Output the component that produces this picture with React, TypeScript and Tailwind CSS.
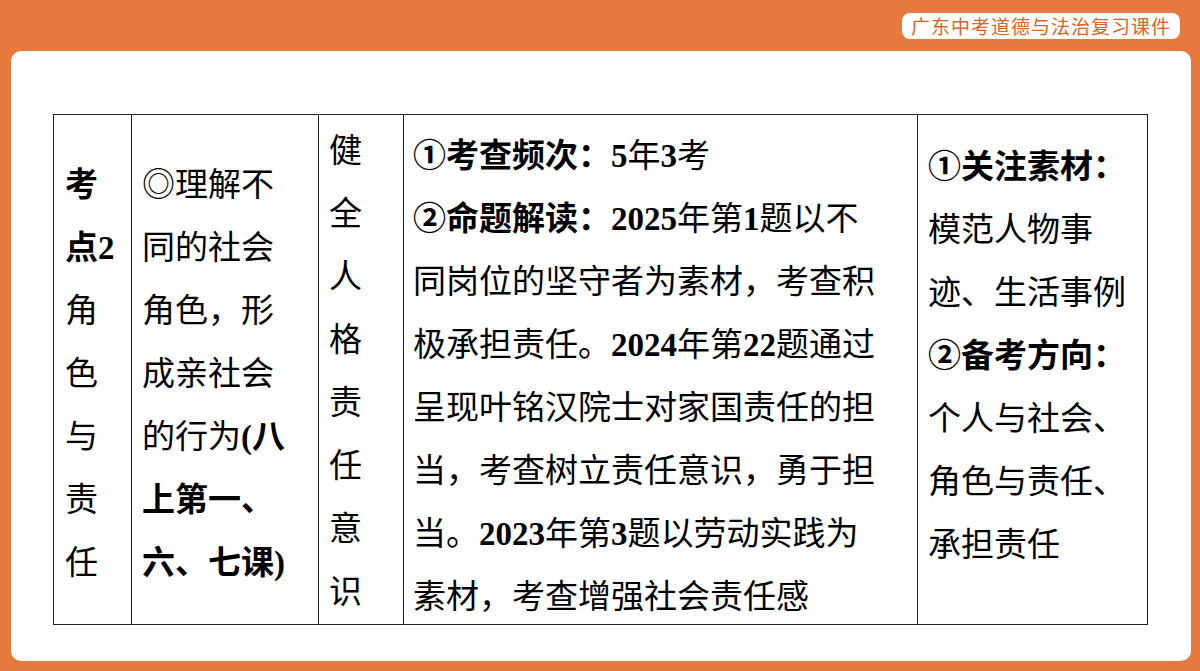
const font = { fontFamily: '"Liberation Serif", "Noto Sans CJK SC", serif' };

function Lines({ lines }: { lines: React.ReactNode[] }) {
  return (
    <>
      {lines.map((l, i) => (
        <div key={i} className="whitespace-nowrap">
          {l}
        </div>
      ))}
    </>
  );
}

export default function App() {
  return (
    <div className="w-[1200px] h-[671px] bg-[#e8793e] relative overflow-hidden" style={font}>
      <div className="absolute right-[20px] top-[13px] h-[26px] px-[9px] bg-white rounded-[8px] text-[#d8642a] text-[19px] leading-[26px] tracking-[1px]" style={{ fontFamily: '"Noto Sans CJK SC", sans-serif' }}>
        广东中考道德与法治复习课件
      </div>
      <div className="absolute left-[11px] top-[51px] w-[1180px] h-[610px] bg-white rounded-[10px] pt-[63px] pl-[42px]">
        <div className="flex w-[1095px] h-[511px] border border-[#222] text-[33px] leading-[63px] text-black">
          <div className="w-[78px] border-r border-[#222] flex flex-col justify-center pl-[11px] pt-[10px]">
            <Lines lines={[<b>考</b>, <b>点2</b>, "角", "色", "与", "责", "任"]} />
          </div>
          <div className="w-[187px] border-r border-[#222] flex flex-col justify-center pl-[10px] pt-[10px]">
            <Lines lines={["◎理解不", "同的社会", "角色，形", "成亲社会", <>的行为<b>(八</b></>, <b>上第一、</b>, <b>六、七课)</b>]} />
          </div>
          <div className="w-[85px] border-r border-[#222] flex flex-col justify-center pl-[10px] pt-[4px]">
            <Lines lines={["健", "全", "人", "格", "责", "任", "意", "识"]} />
          </div>
          <div className="w-[514px] border-r border-[#222] pl-[9px] pt-[10px]">
            <Lines
              lines={[
                <><b>①考查频次：5</b>年<b>3</b>考</>,
                <><b>②命题解读：2025</b>年第<b>1</b>题以不</>,
                "同岗位的坚守者为素材，考查积",
                <>极承担责任。<b>2024</b>年第<b>22</b>题通过</>,
                "呈现叶铭汉院士对家国责任的担",
                "当，考查树立责任意识，勇于担",
                <>当。<b>2023</b>年第<b>3</b>题以劳动实践为</>,
                "素材，考查增强社会责任感",
              ]}
            />
          </div>
          <div className="flex-1 pl-[10px] pt-[21px]">
            <Lines lines={[<b>①关注素材：</b>, "模范人物事", "迹、生活事例", <b>②备考方向：</b>, "个人与社会、", "角色与责任、", "承担责任"]} />
          </div>
        </div>
      </div>
    </div>
  );
}
